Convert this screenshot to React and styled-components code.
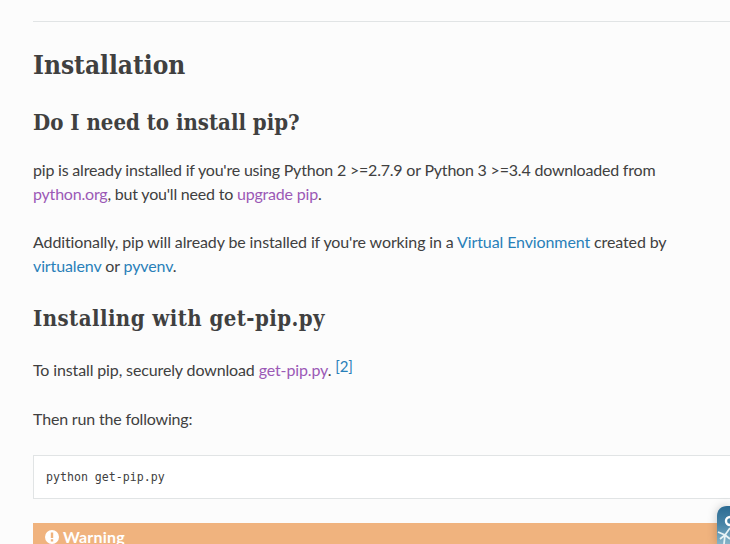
import React from "react";
import styled, { createGlobalStyle } from "styled-components";

const GlobalStyle = createGlobalStyle`
  html, body {
    margin: 0;
    padding: 0;
    height: 100%;
    overflow: hidden;
    background: #fcfcfc;
  }
`;

const Page = styled.div`
  width: 730px;
  height: 544px;
  overflow: hidden;
  position: relative;
  padding: 21px 0 0 33px;
  box-sizing: border-box;
  background: #fcfcfc;
  font-family: "Lato", sans-serif;
  font-size: 16px;
  line-height: 24px;
  color: #404040;
`;

const Rule = styled.hr`
  border: 0;
  border-top: 1px solid #e1e4e5;
  margin: 0 0 24px;
`;

const Title = styled.h1`
  font-family: "DejaVu Serif Condensed", "DejaVu Serif", serif;
  font-weight: 700;
  font-size: 26px;
  line-height: 38px;
  margin: 0 0 22px;
  color: #404040;
`;

const SubTitle = styled.h2`
  font-family: "DejaVu Serif Condensed", "DejaVu Serif", serif;
  font-weight: 700;
  font-size: 22px;
  line-height: 32px;
  letter-spacing: ${(p) => p.$track || 0}px;
  margin: 0 0 20px;
  color: #404040;
`;

const Para = styled.p`
  margin: 0 0 ${(p) => p.$after || 24}px;
  letter-spacing: ${(p) => p.$track || -0.17}px;
`;

const Link = styled.a`
  color: ${(p) => (p.$visited ? "#9b59b6" : "#2980b9")};
  text-decoration: none;
`;

const Ref = styled.sup`
  font-size: 15px;
  line-height: 24px;
  vertical-align: 4px;
  color: #2980b9;
`;

const CodeBlock = styled.pre`
  margin: 0 0 24px;
  padding: 12px;
  height: 44px;
  box-sizing: border-box;
  background: #fff;
  border: 1px solid #e1e4e5;
  border-right: 0;
  font-family: "DejaVu Sans Mono", monospace;
  font-size: 11.6px;
  line-height: 18px;
  color: #404040;
`;

const Warning = styled.div`
  background: #f0b37e;
  color: #fff;
  font-weight: 700;
  letter-spacing: 0.2px;
  height: 40px;
  padding: 2px 12px;
  display: flex;
  align-items: flex-start;
  gap: 4px;
`;

const WarnIcon = styled.svg`
  width: 14px;
  height: 14px;
  margin-top: 5px;
  flex: none;
`;

const Badge = styled.svg`
  position: absolute;
  left: 717px;
  top: 506px;
  width: 13px;
  height: 38px;
  filter: drop-shadow(0 0 5px rgba(0, 0, 0, 0.22));
`;

export default function App() {
  return (
    <Page>
      <GlobalStyle />
      <Rule />
      <Title>Installation</Title>
      <SubTitle>Do I need to install pip?</SubTitle>
      <Para $track={-0.2}>
        pip is already installed if you're using Python 2 &gt;=2.7.9 or Python 3 &gt;=3.4 downloaded from{" "}
        <Link $visited>python.org</Link>, but you'll need to <Link $visited>upgrade pip</Link>.
      </Para>
      <Para $track={-0.115}>
        Additionally, pip will already be installed if you're working in a <Link>Virtual Envionment</Link> created by{" "}
        <Link>virtualenv</Link> or <Link>pyvenv</Link>.
      </Para>
      <SubTitle $track={0.44}>Installing with get-pip.py</SubTitle>
      <Para $track={-0.13} $after={25}>
        To install pip, securely download <Link $visited>get-pip.py</Link>. <Ref>[2]</Ref>
      </Para>
      <Para>Then run the following:</Para>
      <CodeBlock>python get-pip.py</CodeBlock>
      <Warning>
        <WarnIcon viewBox="0 0 14 14">
          <circle cx="7" cy="7" r="7" fill="#fff" />
          <rect x="5.8" y="2.5" width="2.4" height="5.5" fill="#f0b37e" />
          <rect x="5.8" y="9.2" width="2.4" height="2.3" fill="#f0b37e" />
        </WarnIcon>
        Warning
      </Warning>
      <Badge viewBox="0 0 13 38">
        <defs>
          <linearGradient id="badgeFill" x1="0" y1="0" x2="0" y2="1">
            <stop offset="0" stopColor="#2b6a92" />
            <stop offset="0.5" stopColor="#4a86a8" />
            <stop offset="1" stopColor="#86b4c8" />
          </linearGradient>
        </defs>
        <path d="M13 0H10C4 0 0 4 0 10V38H13Z" fill="url(#badgeFill)" />
        <path d="M1 26L8 29L3 33M13 22L8 29L7 38M8 29L13 33" stroke="#e6f2f5" strokeWidth="1.8" fill="none" />
        <circle cx="13" cy="15" r="4" fill="none" stroke="#fff" strokeWidth="2.4" />
      </Badge>
    </Page>
  );
}
